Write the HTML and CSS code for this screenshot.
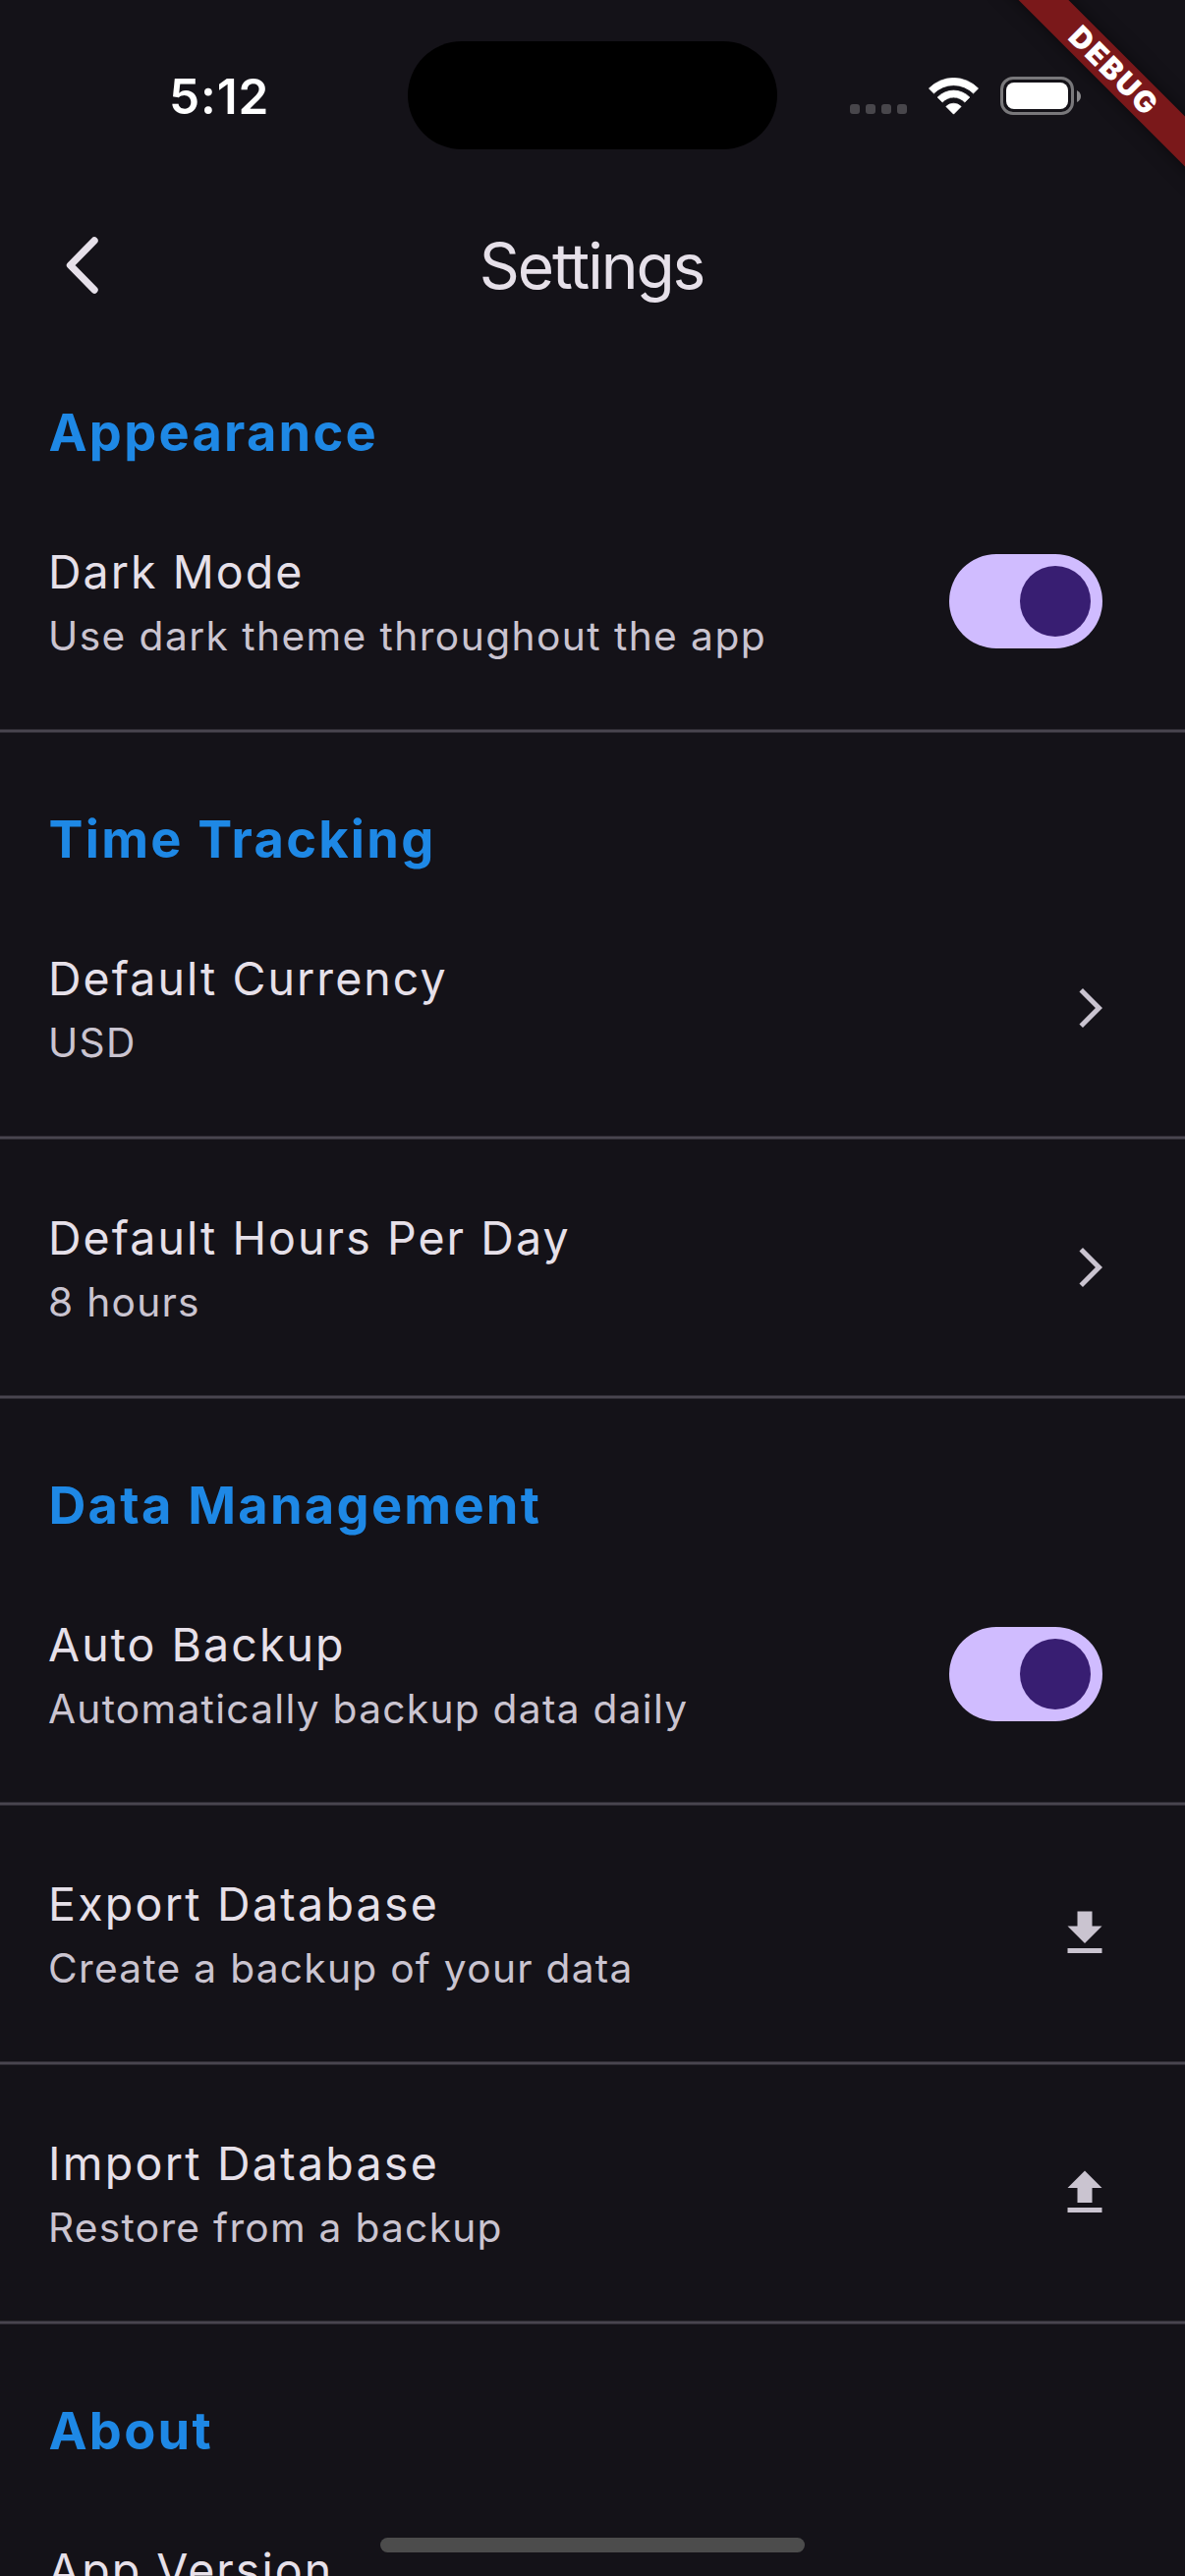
FILE: index.html
```html
<!DOCTYPE html>
<html lang="en">
<head>
<meta charset="utf-8">
<title>Settings</title>
<link rel="stylesheet" href="styles.css">
</head>
<body>
<div class="screen">
  <header class="status-bar">
    <div class="time">5:12</div>
    <div class="island"></div>
    <div class="status-icons">
      <div class="cell-dots"><i></i><i></i><i></i><i></i></div>
      <svg class="wifi" viewBox="0 0 152 112">
        <path d="M1 33A104 104 0 0 1 151 33L136 48A84.500 84.500 0 0 0 16 48Z"/>
        <path d="M27 60A68 68 0 0 1 125 60L110 75A46 46 0 0 0 42 75Z"/>
        <path d="M53 88A32 32 0 0 1 99 88L76 111Z"/>
      </svg>
      <div class="battery"><div class="battery-level"></div></div>
      <svg class="battery-cap" viewBox="0 0 4 12"><path d="M0 0Q4 2 4 6Q4 10 0 12Z"/></svg>
    </div>
  </header>

  <nav class="app-bar">
    <svg class="back" viewBox="0 0 40 64"><path d="M32 7L7.500 32L32 57"/></svg>
    <h1>Settings</h1>
  </nav>

  <main>
    <h2>Appearance</h2>
    <div class="row">
      <div class="text"><div class="title">Dark Mode</div><div class="subtitle subtitle-wide">Use dark theme throughout the app</div></div>
      <div class="switch"><div class="thumb"></div></div>
    </div>
    <hr>
    <h2>Time Tracking</h2>
    <div class="row">
      <div class="text"><div class="title">Default Currency</div><div class="subtitle">USD</div></div>
      <svg class="chevron" viewBox="0 0 24 24"><path d="M6.230 20.230L8 22l10-10L8 2 6.230 3.770 14.460 12z"/></svg>
    </div>
    <hr>
    <div class="row">
      <div class="text"><div class="title">Default Hours Per Day</div><div class="subtitle">8 hours</div></div>
      <svg class="chevron" viewBox="0 0 24 24"><path d="M6.230 20.230L8 22l10-10L8 2 6.230 3.770 14.460 12z"/></svg>
    </div>
    <hr>
    <h2>Data Management</h2>
    <div class="row">
      <div class="text"><div class="title">Auto Backup</div><div class="subtitle">Automatically backup data daily</div></div>
      <div class="switch"><div class="thumb"></div></div>
    </div>
    <hr>
    <div class="row">
      <div class="text"><div class="title title-wide">Export Database</div><div class="subtitle">Create a backup of your data</div></div>
      <svg class="transfer" viewBox="0 0 24 24"><path d="M19 9h-4V3H9v6H5l7 7 7-7zM5 18v2h14v-2H5z"/></svg>
    </div>
    <hr>
    <div class="row">
      <div class="text"><div class="title title-wide">Import Database</div><div class="subtitle">Restore from a backup</div></div>
      <svg class="transfer" viewBox="0 0 24 24"><path d="M9 16h6v-6h4l-7-7-7 7h4v6zM5 18v2h14v-2H5z"/></svg>
    </div>
    <hr>
    <h2>About</h2>
    <div class="row">
      <div class="text"><div class="title">App Version</div></div>
    </div>
  </main>

  <div class="home-indicator"></div>
  <div class="debug-banner">DEBUG</div>
</div>
</body>
</html>
```
FILE: styles.css
```css
* {
  box-sizing: border-box;
}

body {
  margin: 0;
  background: #141218;
  font-family: Inter, Roboto, sans-serif;
}

.screen {
  position: relative;
  width: 1206px;
  height: 2622px;
  overflow: hidden;
  background: #141218;
  color: #e6e0e9;
}

/* Status bar */
.status-bar {
  display: flex;
  justify-content: space-between;
  height: 186px;
  padding: 0 106px 0 172px;
}

.time {
  height: 196px;
  line-height: 196px;
  font-size: 49.5px;
  font-weight: 600;
  letter-spacing: 0.9px;
  color: #fff;
}

.island {
  position: absolute;
  top: 42px;
  left: 415px;
  width: 376px;
  height: 110px;
  border-radius: 55px;
  background: #000;
}

.status-icons {
  display: flex;
  align-items: flex-start;
  padding-top: 78px;
}

.cell-dots {
  display: flex;
  gap: 6px;
  margin: 28px 22px 0 0;
}

.cell-dots i {
  width: 10px;
  height: 10px;
  border-radius: 3px;
  background: #48464b;
}

.wifi {
  width: 51px;
  height: 37.5px;
  margin: 1px 22px 0 0;
  fill: #fff;
  stroke: #fff;
  stroke-width: 2;
  stroke-linejoin: round;
}

.battery {
  width: 75px;
  height: 39px;
  padding: 3px;
  border: 3px solid #79787b;
  border-radius: 13px;
}

.battery-level {
  height: 27px;
  border-radius: 8px;
  background: #fff;
}

.battery-cap {
  width: 4px;
  height: 12px;
  margin: 14px 0 0 3px;
  fill: #8a898c;
}

/* App bar */
.app-bar {
  display: grid;
  grid-template-columns: 140px 1fr 140px;
  align-items: center;
  height: 168px;
}

.back {
  width: 40px;
  height: 64px;
  margin-left: 64px;
  fill: none;
  stroke: #e6e0e9;
  stroke-width: 7.4;
  stroke-linecap: round;
  stroke-linejoin: round;
}

h1 {
  margin: 1px 2px 0 0;
  font-size: 64px;
  line-height: 84px;
  font-weight: 400;
  letter-spacing: -2.04px;
  text-align: center;
}

/* Settings list */
h2 {
  height: 150px;
  margin: 0;
  padding: 48px 49.5px 26px;
  font-size: 52.4px;
  line-height: 76px;
  font-weight: 700;
  letter-spacing: 2.25px;
  color: #1e88e5;
}

.row {
  display: flex;
  justify-content: space-between;
  align-items: center;
  height: 216px;
  padding: 0 72px 0 49px;
}

.text {
  height: 216px;
  padding-top: 42px;
  white-space: nowrap;
}

.title {
  font-size: 46.5px;
  line-height: 72px;
  letter-spacing: 2.06px;
}

.title-wide {
  letter-spacing: 2.27px;
}

.subtitle {
  font-size: 40.7px;
  line-height: 60px;
  letter-spacing: 1.27px;
  color: #cac4d0;
}

.subtitle-wide {
  letter-spacing: 1.42px;
}

hr {
  height: 4px;
  margin: 22px 0;
  border: solid #2f2c34;
  border-width: 1px 0;
  background: #49454f;
}

.switch {
  width: 156px;
  height: 96px;
  margin-right: 12px;
  padding: 12px 12px 12px 72px;
  border-radius: 48px;
  background: #d0bcff;
}

.thumb {
  height: 72px;
  border-radius: 50%;
  background: #381e72;
}

.chevron {
  width: 48px;
  height: 48px;
  fill: #cac4d0;
}

.transfer {
  width: 60px;
  height: 60px;
  fill: #cac4d0;
}

/* Overlays */
.home-indicator {
  position: absolute;
  left: 387px;
  top: 2583px;
  width: 432px;
  height: 15px;
  border-radius: 8px;
  background: #4c4c4c;
}

.debug-banner {
  position: absolute;
  left: 984px;
  top: 54px;
  width: 300px;
  height: 36px;
  transform: rotate(45deg);
  background: #7a181a;
  box-shadow: 0 0 18px rgba(0, 0, 0, 0.5);
  color: #fff;
  font-size: 30px;
  line-height: 36px;
  font-weight: 900;
  letter-spacing: 2px;
  text-align: center;
}
```
